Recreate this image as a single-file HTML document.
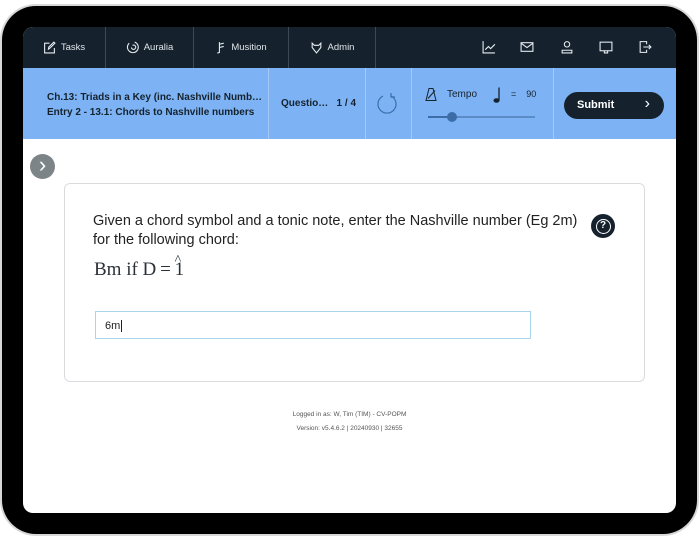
<!DOCTYPE html>
<html><head><style>
*{margin:0;padding:0;box-sizing:border-box}
body{width:700px;height:536px;background:#fff;position:relative;overflow:hidden;font-family:"Liberation Sans",sans-serif}
.dev{position:absolute;left:2px;top:6px;width:695px;height:528px;border-radius:34px;background:#000;box-shadow:0 0 0 2px #d8d8d8}
.scr{position:absolute;left:23px;top:27px;width:653px;height:486px;background:#fff;border-radius:10px;overflow:hidden}
.nav{position:absolute;left:0;top:0;width:653px;height:41px;background:#15222d;color:#dfe5ea;font-size:9.5px}
.nav .it{position:absolute;top:0;height:41px;display:flex;align-items:center;justify-content:center;gap:5px;border-right:1px solid #3a4a58}
.bar{position:absolute;left:0;top:41px;width:653px;height:71px;background:#7db3f5;color:#15222d}
.bar .d{position:absolute;top:0;height:71px;width:1px;background:#a5caf7}
.ic{position:absolute;top:13px}
</style></head><body>
<div class="dev"></div>
<div class="scr">
 <div class="nav">
  <div class="it" style="left:0;width:83px"><svg width="13" height="13" viewBox="0 0 12 12" fill="none" stroke="#e8edf2" stroke-width="1"><path d="M6 2H1.5v9h9V6.5M5 7.5l.3-1.8L10 1l1 1-4.7 4.7z"/></svg>Tasks</div>
  <div class="it" style="left:83px;width:88px"><svg width="13" height="13" viewBox="0 0 12 12" fill="none" stroke="#e8edf2" stroke-width="1"><path d="M3 2a5 5 0 1 0 5-1M6 4a2 2 0 1 1-1 2"/></svg>Auralia</div>
  <div class="it" style="left:171px;width:95px"><svg width="11" height="13" viewBox="0 0 10 12" fill="none" stroke="#e8edf2" stroke-width="1"><path d="M4 1v10M4 3l4-1M4 6l4-1M2 11a2 1 0 0 0 2-1"/></svg>Musition</div>
  <div class="it" style="left:266px;width:87px"><svg width="13" height="13" viewBox="0 0 12 12" fill="none" stroke="#e8edf2" stroke-width="1"><path d="M2 2l2 2h4l2-2v4l-4 5-4-5z"/></svg>Admin</div>
  <svg class="ic" style="left:459px" width="14" height="14" viewBox="0 0 13 13" fill="none" stroke="#e8edf2"><path d="M1 1v11h11M3 9l3-3 2 2 4-4"/></svg>
  <svg class="ic" style="left:497px" width="14" height="14" viewBox="0 0 13 13" fill="none" stroke="#e8edf2"><rect x="1" y="2.5" width="11" height="8"/><path d="M1 3l5.5 4L12 3"/></svg>
  <svg class="ic" style="left:537px" width="14" height="14" viewBox="0 0 13 13" fill="none" stroke="#e8edf2"><circle cx="6.5" cy="4" r="2.5"/><path d="M2 12v-2.5h9V12z"/></svg>
  <svg class="ic" style="left:576px" width="14" height="14" viewBox="0 0 13 13" fill="none" stroke="#e8edf2"><rect x="1" y="2" width="11" height="8"/><path d="M5 10v2h3v-2"/></svg>
  <svg class="ic" style="left:615px" width="14" height="14" viewBox="0 0 13 13" fill="none" stroke="#e8edf2"><path d="M8 4V1.5H2v10h6V9M5 6.5h7M10 4.5l2 2-2 2"/></svg>
 </div>
 <div class="bar">
  <div style="position:absolute;left:24px;top:22px;font-size:10px;font-weight:bold;line-height:15px">Ch.13: Triads in a Key (inc. Nashville Numb…<br>Entry 2 - 13.1: Chords to Nashville numbers</div>
  <div class="d" style="left:245px"></div>
  <div style="position:absolute;left:258px;top:30px;font-size:10px;font-weight:bold">Questio…&nbsp;&nbsp; 1 / 4</div>
  <div class="d" style="left:342px"></div>
  <svg style="position:absolute;left:353px;top:24px" width="22" height="24" viewBox="0 0 22 24" fill="none" stroke="#3d6da8" stroke-width="1.2"><path d="M7 4a9 9 0 1 0 8 0M15 1v4h4"/></svg>
  <div class="d" style="left:388px"></div>
  <svg style="position:absolute;left:402px;top:19px" width="12" height="15" viewBox="0 0 12 14" fill="none" stroke="#15222d"><path d="M4 1h4l3 12H1zM3 11l7-8"/></svg>
  <div style="position:absolute;left:424px;top:21px;font-size:10px">Tempo</div>
  <svg style="position:absolute;left:470px;top:19px" width="8" height="17" viewBox="0 0 8 16"><path d="M6 0v13" stroke="#15222d" stroke-width="1.3"/><ellipse cx="3.5" cy="13" rx="3" ry="2.3" fill="#15222d"/></svg>
  <div style="position:absolute;left:488px;top:21px;font-size:9px">=&nbsp;&nbsp;&nbsp; 90</div>
  <div style="position:absolute;left:405px;top:48px;width:24px;height:2px;background:#3d6da8"></div>
  <div style="position:absolute;left:429px;top:48px;width:83px;height:2px;background:#5b8cc8"></div>
  <div style="position:absolute;left:424px;top:44px;width:10px;height:10px;border-radius:5px;background:#3d6da8"></div>
  <div class="d" style="left:530px"></div>
  <div style="position:absolute;left:541px;top:24px;width:100px;height:27px;border-radius:14px;background:#15222d;color:#fff;font-size:11px;font-weight:bold;padding:7px 0 0 13px">Submit<span style="position:absolute;right:14px;top:3px;font-size:16px;font-weight:normal">›</span></div>
 </div>
 <div style="position:absolute;left:7px;top:127px;width:25px;height:25px;border-radius:13px;background:#7d8488;color:#fff;font-size:22px;line-height:21px;text-align:center">›</div>
 <div style="position:absolute;left:41px;top:156px;width:581px;height:199px;border:1px solid #d9dcdf;border-radius:6px">
  <div style="position:absolute;left:28px;top:28px;font-size:14.5px;color:#222;line-height:19px;width:500px">Given a chord symbol and a tonic note, enter the Nashville number (Eg 2m) for the following chord:</div>
  <div style="position:absolute;left:526px;top:30px;width:24px;height:24px;border-radius:12px;background:#15222d;color:#fff;font-size:12px;text-align:center;line-height:20px"><span style="display:inline-block;width:15px;height:15px;border:1.6px solid #fff;border-radius:8px;font-size:10px;font-weight:bold;line-height:12px;margin-top:4px">?</span></div>
  <div style="position:absolute;left:29px;top:75px;font-family:'Liberation Serif',serif;font-size:19px;color:#2a3238;white-space:nowrap">Bm if D&#8201;=&#8201;<span style="position:relative">1<span style="position:absolute;left:0px;top:-6px;font-size:14px">^</span></span></div>
  <div style="position:absolute;left:30px;top:127px;width:436px;height:28px;border:1px solid #a9d4ea;font-size:11px;color:#222;padding:8px 0 0 9px">6m<span style="border-left:1px solid #222;margin-left:1px"></span></div>
 </div>
 <div style="position:absolute;left:0;top:381px;width:653px;text-align:center;font-size:6.5px;color:#555;line-height:14px">Logged in as: W, Tim (TIM) - CV-POPM<br>Version: v5.4.6.2 | 20240930 | 32655</div>
</div>
</body></html>
